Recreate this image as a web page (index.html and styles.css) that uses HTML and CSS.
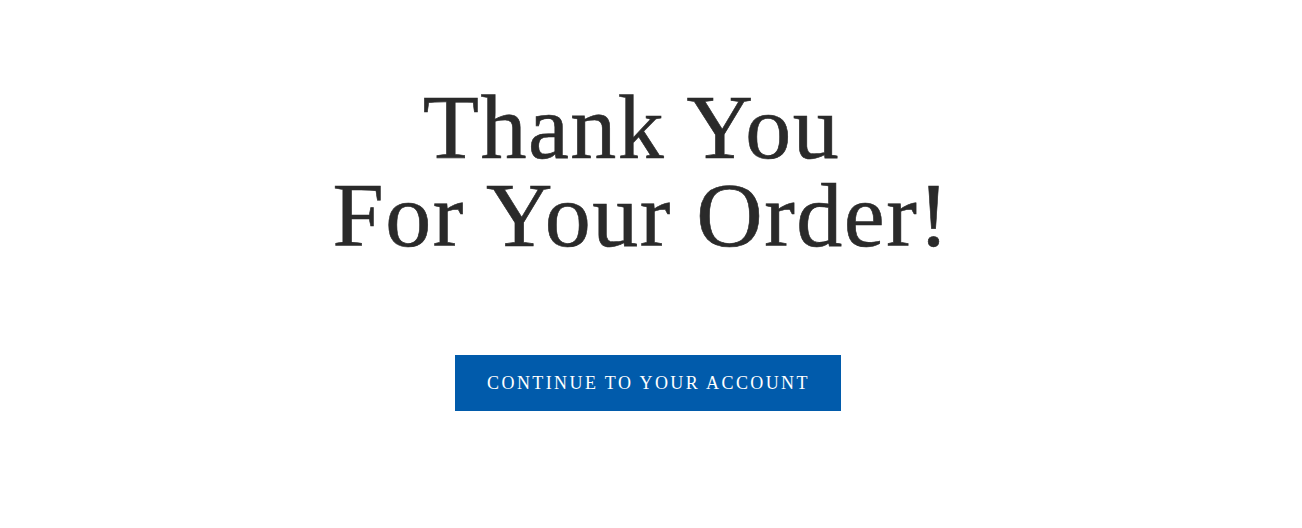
FILE: index.html
```html
<!DOCTYPE html>
<html lang="en">
<head>
<meta charset="utf-8">
<title>Thank You For Your Order</title>
<link rel="stylesheet" href="styles.css">
</head>
<body>
<main class="thanks">
  <h1 class="thanks-title"><span class="thanks-line thanks-line-first">Thank You</span><span class="thanks-line">For Your Order!</span></h1>
  <a class="thanks-button" href="#">Continue to your account</a>
</main>
</body>
</html>
```

FILE: styles.css
```css
html, body {
  margin: 0;
  padding: 0;
  background: #ffffff;
}

.thanks {
  display: flex;
  flex-direction: column;
  align-items: center;
  padding-top: 83px;
  font-family: "Liberation Serif", "Times New Roman", serif;
}

.thanks-title {
  margin: 0 19px 0 0;
  font-size: 92px;
  line-height: 88px;
  font-weight: 400;
  letter-spacing: 1.5px;
  color: #2a2a2a;
  text-align: center;
  -webkit-text-stroke: 0.6px #2a2a2a;
}

.thanks-line {
  display: block;
}

.thanks-line-first {
  padding-right: 20px;
}

.thanks-button {
  display: block;
  margin: 96px 6px 0 0;
  height: 56px;
  line-height: 56px;
  padding: 0 31px 0 32px;
  background: #015bab;
  color: #ffffff;
  font-size: 18px;
  letter-spacing: 2.4px;
  text-transform: uppercase;
  text-decoration: none;
}
```
